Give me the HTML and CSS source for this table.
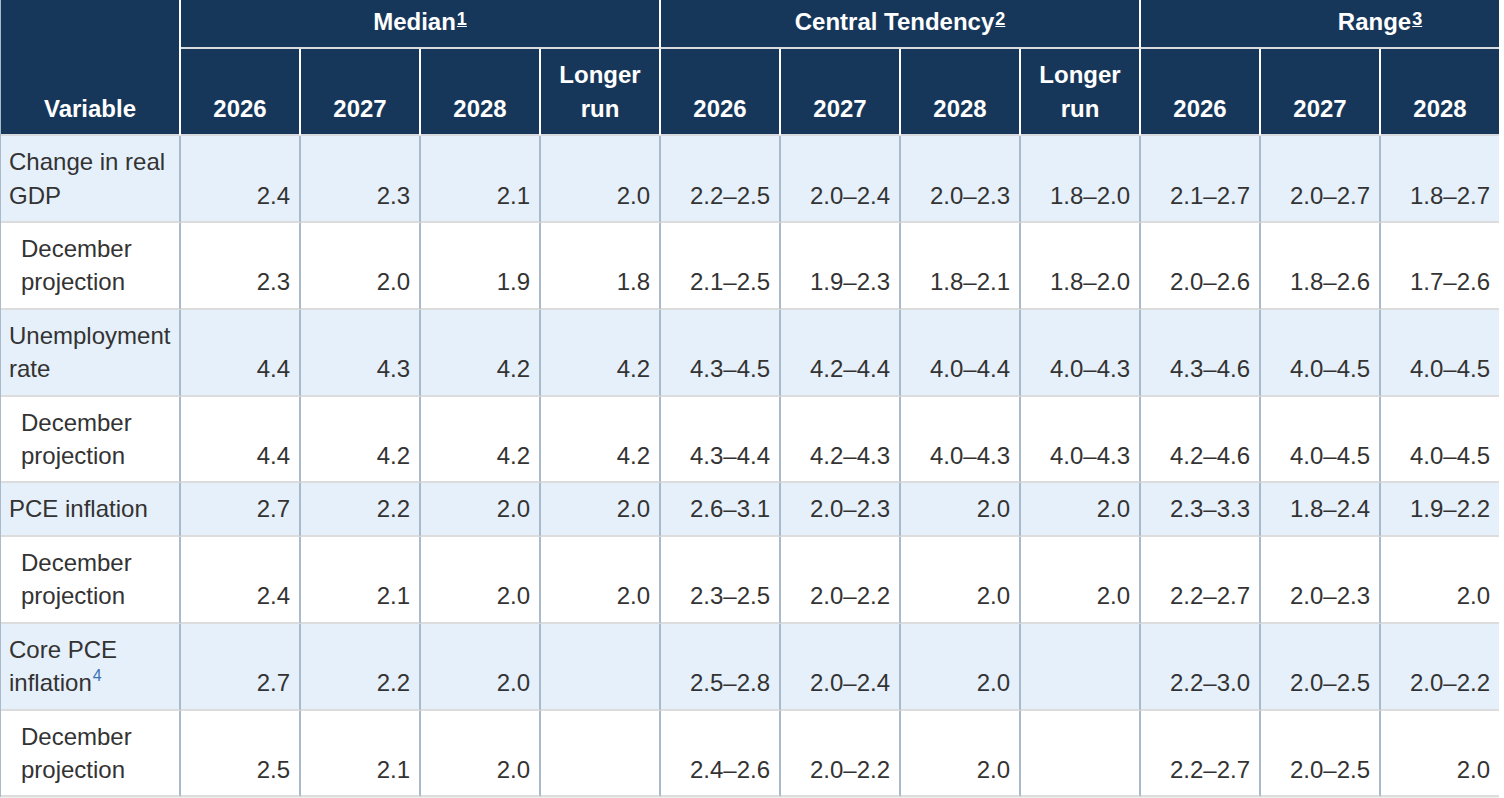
FILE: index.html
```html
<!DOCTYPE html>
<html lang="en">
<head>
<meta charset="utf-8">
<title>Economic projections</title>
<link rel="stylesheet" href="styles.css">
</head>
<body>
<div class="wrap">
<table class="proj">
  <colgroup>
    <col class="c-var">
    <col class="c-num"><col class="c-num"><col class="c-num"><col class="c-num">
    <col class="c-num"><col class="c-num"><col class="c-num"><col class="c-num">
    <col class="c-num"><col class="c-num"><col class="c-num"><col class="c-num">
  </colgroup>
  <thead>
    <tr class="h1">
      <th class="var-h" rowspan="2">Variable</th>
      <th colspan="4">Median<sup class="fn">1</sup></th>
      <th colspan="4">Central Tendency<sup class="fn">2</sup></th>
      <th colspan="4">Range<sup class="fn">3</sup></th>
    </tr>
    <tr class="h2">
      <th>2026</th><th>2027</th><th>2028</th><th>Longer<br>run</th>
      <th>2026</th><th>2027</th><th>2028</th><th>Longer<br>run</th>
      <th>2026</th><th>2027</th><th>2028</th><th></th>
    </tr>
  </thead>
  <tbody>
    <tr class="shade">
      <td class="var">Change in real<br>GDP</td>
      <td>2.4</td><td>2.3</td><td>2.1</td><td>2.0</td>
      <td>2.2–2.5</td><td>2.0–2.4</td><td>2.0–2.3</td><td>1.8–2.0</td>
      <td>2.1–2.7</td><td>2.0–2.7</td><td>1.8–2.7</td><td></td>
    </tr>
    <tr>
      <td class="var sub">December<br>projection</td>
      <td>2.3</td><td>2.0</td><td>1.9</td><td>1.8</td>
      <td>2.1–2.5</td><td>1.9–2.3</td><td>1.8–2.1</td><td>1.8–2.0</td>
      <td>2.0–2.6</td><td>1.8–2.6</td><td>1.7–2.6</td><td></td>
    </tr>
    <tr class="shade">
      <td class="var">Unemployment<br>rate</td>
      <td>4.4</td><td>4.3</td><td>4.2</td><td>4.2</td>
      <td>4.3–4.5</td><td>4.2–4.4</td><td>4.0–4.4</td><td>4.0–4.3</td>
      <td>4.3–4.6</td><td>4.0–4.5</td><td>4.0–4.5</td><td></td>
    </tr>
    <tr>
      <td class="var sub">December<br>projection</td>
      <td>4.4</td><td>4.2</td><td>4.2</td><td>4.2</td>
      <td>4.3–4.4</td><td>4.2–4.3</td><td>4.0–4.3</td><td>4.0–4.3</td>
      <td>4.2–4.6</td><td>4.0–4.5</td><td>4.0–4.5</td><td></td>
    </tr>
    <tr class="shade">
      <td class="var">PCE inflation</td>
      <td>2.7</td><td>2.2</td><td>2.0</td><td>2.0</td>
      <td>2.6–3.1</td><td>2.0–2.3</td><td>2.0</td><td>2.0</td>
      <td>2.3–3.3</td><td>1.8–2.4</td><td>1.9–2.2</td><td></td>
    </tr>
    <tr>
      <td class="var sub">December<br>projection</td>
      <td>2.4</td><td>2.1</td><td>2.0</td><td>2.0</td>
      <td>2.3–2.5</td><td>2.0–2.2</td><td>2.0</td><td>2.0</td>
      <td>2.2–2.7</td><td>2.0–2.3</td><td>2.0</td><td></td>
    </tr>
    <tr class="shade">
      <td class="var">Core PCE<br>inflation<sup class="note">4</sup></td>
      <td>2.7</td><td>2.2</td><td>2.0</td><td></td>
      <td>2.5–2.8</td><td>2.0–2.4</td><td>2.0</td><td></td>
      <td>2.2–3.0</td><td>2.0–2.5</td><td>2.0–2.2</td><td></td>
    </tr>
    <tr>
      <td class="var sub">December<br>projection</td>
      <td>2.5</td><td>2.1</td><td>2.0</td><td></td>
      <td>2.4–2.6</td><td>2.0–2.2</td><td>2.0</td><td></td>
      <td>2.2–2.7</td><td>2.0–2.5</td><td>2.0</td><td></td>
    </tr>
  </tbody>
</table>
</div>
</body>
</html>
```

FILE: styles.css
```css
html, body {
  margin: 0;
  padding: 0;
  background: #ffffff;
}

body {
  font-family: "Liberation Sans", Arial, Helvetica, sans-serif;
  color: #333333;
}

.wrap {
  width: 1499px;
  overflow: hidden;
  border-bottom: 3px solid #f0f0f0;
}

.proj {
  border-collapse: separate;
  border-spacing: 0;
  table-layout: fixed;
  width: 1621px;
  font-size: 24px;
  line-height: 33.4px;
  border-left: 1px solid #a9bacb;
}

.c-var { width: 180px; }
.c-num { width: 120px; }

.proj th {
  background: #17375a;
  color: #ffffff;
  font-weight: bold;
  text-align: center;
  border-right: 2px solid #ffffff;
  border-bottom: 2px solid #d8dadd;
  padding: 9px 6px;
}

.proj .h1 th {
  padding: 5px 6px 9px;
}

.proj .var-h {
  vertical-align: bottom;
  padding: 9px 6px;
}

.proj .h2 th {
  vertical-align: bottom;
}

.fn {
  font-size: 18px;
  line-height: 0;
  text-decoration: underline;
  vertical-align: 5px;
  margin-left: 1px;
}

.proj td {
  text-align: right;
  vertical-align: bottom;
  padding: 9px 9px 9px 6px;
  border-right: 2px solid #a9bacb;
  border-bottom: 2px solid #dcdcdc;
  white-space: nowrap;
}

.proj .shade td {
  background: #e6f0fa;
}

.proj td.var {
  text-align: left;
  vertical-align: top;
  padding-left: 8px;
  padding-right: 4px;
}

.proj td.sub {
  padding-left: 20px;
}

.note {
  font-size: 16px;
  line-height: 0;
  vertical-align: 10px;
  color: #3a70b8;
  margin-left: 1px;
}
```
